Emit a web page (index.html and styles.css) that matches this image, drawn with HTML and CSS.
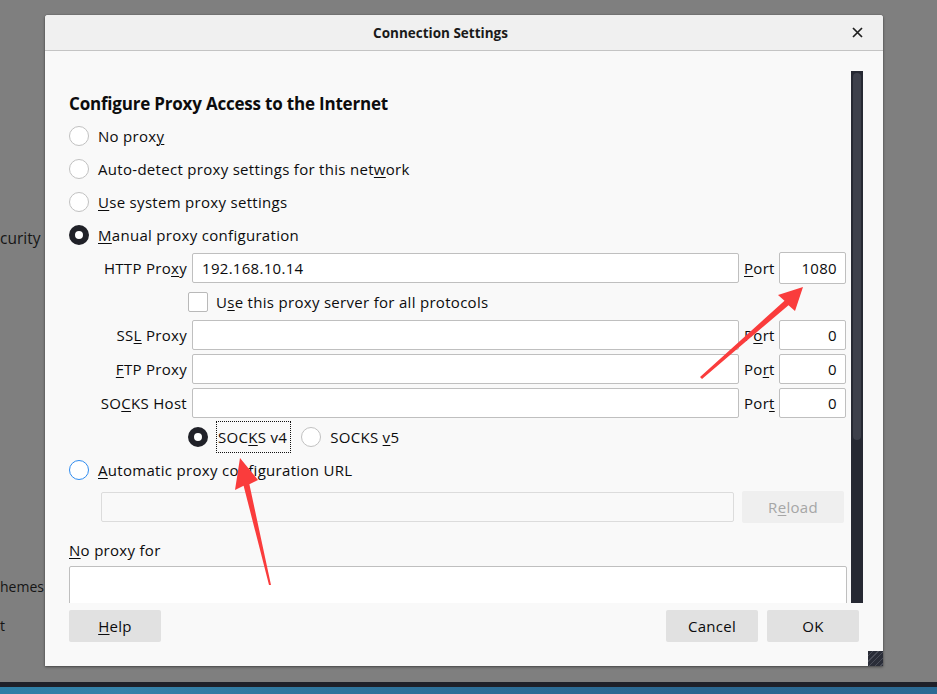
FILE: index.html
```html
<!DOCTYPE html>
<html>
<head>
<meta charset="utf-8">
<title>Connection Settings</title>
<link rel="stylesheet" href="styles.css">
</head>
<body>
<div class="screen">
  <div class="backdrop">
    <div class="bg-item bg-security">curity</div>
    <div class="bg-item bg-themes">hemes</div>
    <div class="bg-item bg-t">t</div>
  </div>
  <div class="taskbar">
    <div class="taskbar-edge"></div>
    <div class="taskbar-fill"></div>
  </div>

  <div class="dialog">
    <div class="titlebar">
      <span class="title">Connection Settings</span>
      <span class="close">
        <svg width="11" height="11" viewBox="0 0 11 11"><path d="M1 1 L10 10 M10 1 L1 10" stroke="#1f1f1f" stroke-width="1.7" fill="none"/></svg>
      </span>
    </div>
    <div class="body">
      <div class="scroll">
        <div class="content">
          <h1 class="heading">Configure Proxy Access to the Internet</h1>
          <div class="opt"><span class="radio"></span><span class="opt-text">No prox<u>y</u></span></div>
          <div class="opt"><span class="radio"></span><span class="opt-text">Auto-detect proxy settings for this net<u>w</u>ork</span></div>
          <div class="opt"><span class="radio"></span><span class="opt-text"><u>U</u>se system proxy settings</span></div>
          <div class="opt"><span class="radio on"></span><span class="opt-text"><u>M</u>anual proxy configuration</span></div>

          <div class="proxy-grid">
            <span class="lbl">HTTP Pro<u>x</u>y</span>
            <span class="input">192.168.10.14</span>
            <span class="plbl"><u>P</u>ort</span>
            <span class="input num tall">1080</span>

            <div class="check-row">
              <span class="checkbox"></span>
              <span class="opt-text">U<u>s</u>e this proxy server for all protocols</span>
            </div>

            <span class="lbl">SS<u>L</u> Proxy</span>
            <span class="input"></span>
            <span class="plbl">P<u>o</u>rt</span>
            <span class="input num">0</span>

            <span class="lbl"><u>F</u>TP Proxy</span>
            <span class="input"></span>
            <span class="plbl">Po<u>r</u>t</span>
            <span class="input num">0</span>

            <span class="lbl">SO<u>C</u>KS Host</span>
            <span class="input"></span>
            <span class="plbl">Por<u>t</u></span>
            <span class="input num">0</span>

            <div class="socks-row">
              <span class="radio on"></span>
              <span class="opt-text focus">SOC<u>K</u>S v4</span>
              <span class="radio"></span>
              <span class="opt-text">SOCKS <u>v</u>5</span>
            </div>
          </div>

          <div class="opt auto"><span class="radio focused"></span><span class="opt-text"><u>A</u>utomatic proxy configuration URL</span></div>
          <div class="url-row">
            <span class="input disabled"></span>
            <span class="btn disabled">R<u>e</u>load</span>
          </div>
          <div class="np-label"><u>N</u>o proxy for</div>
          <div class="textarea"></div>
        </div>
        <div class="scrollbar"><div class="thumb"></div></div>
      </div>
      <div class="buttons">
        <span class="btn"><u>H</u>elp</span>
        <div class="btn-group">
          <span class="btn">Cancel</span>
          <span class="btn">OK</span>
        </div>
      </div>
    </div>
    <div class="grip"></div>
  </div>

  <svg class="arrows" width="937" height="694" viewBox="0 0 937 694">
    <polygon points="700,377 702,379 788.5,305.2 795,311 803,287 778,295 784.5,300.8" fill="#fa3c3c"/>
    <polygon points="269,585 271,585 249.4,484.3 258,480 240,458 235,490 243.6,485.7" fill="#fa3c3c"/>
  </svg>
</div>
</body>
</html>
```

FILE: styles.css
```css
* { box-sizing: border-box; }
html, body { margin: 0; padding: 0; }
body {
  font-family: "Open Sans", "Noto Sans", sans-serif;
  color: #0c0c0d;
}
u { text-decoration: underline; text-underline-offset: 2px; text-decoration-thickness: 1px; }

.screen {
  position: relative;
  width: 937px;
  height: 694px;
  overflow: hidden;
  background: #7f7f7f;
  display: flex;
  flex-direction: column;
}

.backdrop {
  flex: 1;
  display: flex;
  flex-direction: column;
  color: #151515;
}
.bg-item { line-height: 22px; flex: none; }
.bg-security { font-size: 15.5px; margin-top: 227px; }
.bg-themes { font-size: 14px; margin-top: 328px; line-height: 20px; }
.bg-t { font-size: 14px; margin-top: 19px; line-height: 20px; }

.taskbar { height: 12px; flex: none; display: flex; flex-direction: column; }
.taskbar-edge { height: 5px; background: #1e2029; }
.taskbar-fill {
  flex: 1;
  background: linear-gradient(90deg, #2d7ea6 0%, #3582aa 13%, #2f779f 30%, #2c6e98 50%, #2a6690 75%, #2b6a94 100%);
}

.dialog {
  position: absolute;
  left: 45px;
  top: 15px;
  width: 838px;
  height: 651px;
  background: #f9f9f9;
  border-radius: 3px 3px 0 0;
  box-shadow: 0 1px 3px rgba(0,0,0,0.45), 0 0 1px rgba(0,0,0,0.4);
  display: flex;
  flex-direction: column;
}

.titlebar {
  height: 36px;
  flex: none;
  background: #f0f0f0;
  border-bottom: 1px solid #c4c4c4;
  border-radius: 3px 3px 0 0;
  display: flex;
  align-items: center;
  justify-content: center;
  padding-right: 47px;
  position: relative;
}
.title {
  font-size: 13.5px;
  font-weight: 700;
  color: #1a1a1a;
}
.close {
  position: absolute;
  right: 20px;
  top: 12px;
  width: 11px;
  height: 11px;
  display: flex;
}

.body {
  flex: 1;
  display: flex;
  flex-direction: column;
}

.scroll {
  margin: 20px 20px 0 24px;
  height: 532px;
  flex: none;
  display: flex;
  overflow: hidden;
}
.content {
  flex: 1;
  padding: 22px 4px 0 0;
  display: flex;
  flex-direction: column;
  font-size: 15px;
  letter-spacing: 0.3px;
}
.content > * { flex: none; }
.heading {
  margin: 0 0 4px 0;
  font-size: 17px;
  line-height: 22px;
  font-weight: 700;
  letter-spacing: -0.2px;
  color: #0c0c0d;
}

.opt {
  height: 33px;
  display: flex;
  align-items: center;
  gap: 9px;
}
.opt-text { font-size: 15px; line-height: 20px; white-space: nowrap; }

.radio {
  width: 20px;
  height: 20px;
  flex: none;
  border-radius: 50%;
  border: 1px solid #c1c1c1;
  background: #fff;
}
.radio.on { border: 6px solid #202128; }
.radio.focused { border: 1.5px solid #2f8cf0; }

.proxy-grid {
  margin-top: 2px;
  display: grid;
  grid-template-columns: 118px 547px 30px 67px;
  grid-template-rows: 30px 29px 30px 30px 30px 30px;
  column-gap: 5px;
  row-gap: 4px;
  align-items: center;
}
.lbl { text-align: right; white-space: nowrap; line-height: 20px; }
.plbl { white-space: nowrap; line-height: 20px; }
.input {
  height: 30px;
  background: #fff;
  border: 1px solid #bfbfbf;
  border-radius: 2px;
  padding: 0 9px;
  display: flex;
  align-items: center;
  font-size: 15px;
}
.input.num { justify-content: flex-end; padding-right: 8px; }
.input.tall { height: 32px; }

.check-row {
  grid-column: 2 / 5;
  margin-left: -4px;
  display: flex;
  align-items: center;
  gap: 8px;
}
.checkbox {
  width: 20px;
  height: 20px;
  flex: none;
  background: #fff;
  border: 1px solid #b9b9b9;
  border-radius: 2px;
}

.socks-row {
  grid-column: 2 / 5;
  margin-left: -4px;
  display: flex;
  align-items: center;
}
.socks-row .radio { margin-right: 9px; }
.socks-row .focus {
  outline: 1px dotted #111;
  padding: 5px 3px 5px 1px;
  line-height: 20px;
  margin-right: 11px;
}

.opt.auto { margin-top: 1px; }

.url-row {
  margin-top: 5px;
  height: 32px;
  padding-left: 32px;
  display: flex;
  align-items: center;
  gap: 8px;
}
.input.disabled {
  width: 633px;
  background: #f9f9f9;
  border-color: #dcdcdc;
}

.btn {
  height: 32px;
  width: 92px;
  display: flex;
  align-items: center;
  justify-content: center;
  background: #e1e1e1;
  border-radius: 2px;
  font-size: 15px;
  letter-spacing: 0.3px;
  color: #0c0c0d;
}
.url-row .btn.disabled {
  width: 102px;
  background: #efefef;
  color: #a6a6a6;
}

.np-label { margin-top: 17px; line-height: 20px; }
.textarea {
  margin-top: 6px;
  height: 80px;
  background: #fff;
  border: 1px solid #bfbfbf;
  border-radius: 2px;
}

.scrollbar {
  width: 12px;
  flex: none;
  background: #262933;
  padding: 2px 2px;
}
.thumb {
  height: 367px;
  border-radius: 4px;
  background: #3d404b;
}

.buttons {
  margin-top: 7px;
  padding: 0 24px 0 24px;
  display: flex;
  justify-content: space-between;
}
.btn-group { display: flex; gap: 9px; }

.grip {
  position: absolute;
  right: 0;
  bottom: 0;
  width: 15px;
  height: 15px;
  background:
    repeating-linear-gradient(135deg, #2a2d38 0 3px, #4a4d58 3px 4px);
}

.arrows {
  position: absolute;
  left: 0;
  top: 0;
  pointer-events: none;
}
```
